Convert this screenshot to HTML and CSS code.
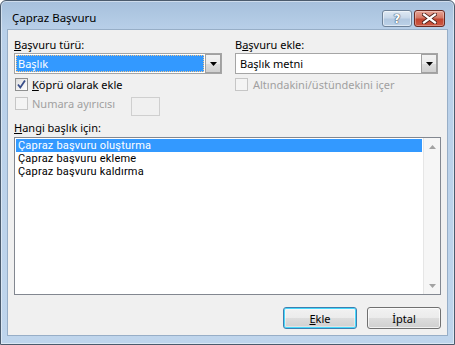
FILE: index.html
```html
<!DOCTYPE html>
<html lang="tr">
<head>
<meta charset="utf-8">
<title>Çapraz Başvuru</title>
<link rel="stylesheet" href="styles.css">
</head>
<body>
<div class="window">
  <div class="titlebar">
    <span class="title">Çapraz Başvuru</span>
    <div class="caption-btns">
      <div class="cbtn help">
        <span class="glyph">?</span>
      </div>
      <div class="cbtn close">
        <svg width="15" height="11" viewBox="0 0 15 11">
          <path d="M2 1.5 L13 9.5 M13 1.5 L2 9.5" stroke="#4a1c16" stroke-width="4" stroke-linecap="square"/>
          <path d="M2 1.5 L13 9.5 M13 1.5 L2 9.5" stroke="#ffffff" stroke-width="2.2" stroke-linecap="square"/>
        </svg>
      </div>
    </div>
  </div>
  <div class="client">
    <div class="top-grid">
      <div class="col">
        <div class="label"><u>B</u>aşvuru türü:</div>
        <div class="combo">
          <div class="combo-value selected"><span>Başlık</span></div>
          <div class="combo-btn">
            <svg width="7" height="4" viewBox="0 0 7 4"><path d="M0 0 H7 L3.5 4 Z" fill="#000"/></svg>
          </div>
        </div>
        <div class="check-row">
          <span class="checkbox checked">
            <svg width="11" height="11" viewBox="0 0 11 11"><path d="M2 5.5 L4.3 8.5 L9 1.5" fill="none" stroke="#3a4f8a" stroke-width="1.8"/></svg>
          </span>
          <span class="check-text"><u>K</u>öprü olarak ekle</span>
        </div>
        <div class="check-row numara">
          <span class="checkbox disabled"></span>
          <span class="check-text disabled-text">Numara ayırıcısı</span>
          <span class="textbox"></span>
        </div>
      </div>
      <div class="col">
        <div class="label">B<u>a</u>şvuru ekle:</div>
        <div class="combo">
          <div class="combo-value"><span>Başlık metni</span></div>
          <div class="combo-btn">
            <svg width="7" height="4" viewBox="0 0 7 4"><path d="M0 0 H7 L3.5 4 Z" fill="#000"/></svg>
          </div>
        </div>
        <div class="check-row right-check">
          <span class="checkbox disabled"></span>
          <span class="check-text disabled-text">Altındakini/üstündekini içer</span>
        </div>
      </div>
    </div>
    <div class="label list-label"><u>H</u>angi başlık için:</div>
    <div class="listbox">
      <ul class="items">
        <li class="item selected">Çapraz başvuru oluşturma</li>
        <li class="item">Çapraz başvuru ekleme</li>
        <li class="item">Çapraz başvuru kaldırma</li>
      </ul>
      <div class="scrollbar">
        <div class="sb-arrow">
          <svg width="7" height="4" viewBox="0 0 7 4"><path d="M0 4 H7 L3.5 0 Z" fill="#a3a3a3"/></svg>
        </div>
        <div class="sb-track"></div>
        <div class="sb-arrow">
          <svg width="7" height="4" viewBox="0 0 7 4"><path d="M0 0 H7 L3.5 4 Z" fill="#a3a3a3"/></svg>
        </div>
      </div>
    </div>
    <div class="buttons">
      <div class="btn default"><u>E</u>kle</div>
      <div class="btn">İptal</div>
    </div>
  </div>
</div>
</body>
</html>
```

FILE: styles.css
```css
* { box-sizing: border-box; }
html, body { margin: 0; padding: 0; }
body {
  width: 455px;
  height: 345px;
  overflow: hidden;
  background: #ffffff;
  font-family: "Noto Sans", "Open Sans", sans-serif;
  font-size: 11px;
  color: #000;
}
u { text-decoration: underline; text-underline-offset: 1px; }

.window {
  width: 455px;
  height: 345px;
  border: 1px solid #4b5b6d;
  border-radius: 6px 6px 0 0;
  background: linear-gradient(#a6c0dc 0px, #b9d0e9 30px, #bfd5ec 100%);
  padding: 0 6px 8px 6px;
  display: flex;
  flex-direction: column;
  box-shadow: inset 0 0 0 1px rgba(255,255,255,0.45);
}

.titlebar {
  height: 28px;
  display: flex;
  align-items: flex-start;
  justify-content: space-between;
  padding-left: 5px;
  padding-right: 3px;
}
.title {
  margin-top: 8px;
  line-height: 17px;
  font-size: 11.5px;
  color: #000;
}
.caption-btns {
  display: flex;
  gap: 2px;
  margin-top: 9px;
}
.cbtn {
  height: 17px;
  border-radius: 3px;
  display: flex;
  align-items: center;
  justify-content: center;
}
.cbtn.help {
  width: 30px;
  border: 1px solid #6e8299;
  background: linear-gradient(#dfe9f4 0%, #c8d8ea 45%, #b2c8e0 55%, #bcd1e8 100%);
  box-shadow: inset 0 0 0 1px rgba(255,255,255,0.5);
}
.cbtn.help .glyph {
  font-family: "DejaVu Sans", sans-serif;
  font-weight: bold;
  font-size: 12px;
  line-height: 14px;
  color: #ffffff;
  text-shadow: 0 0 1px #3d5068, 0 0 1px #3d5068, 0 0 1px #3d5068;
}
.cbtn.close {
  width: 31px;
  border: 1px solid #6b2a22;
  background: linear-gradient(#e8a597 0%, #d47866 45%, #c3442f 55%, #cc5a45 100%);
  box-shadow: inset 0 0 0 1px rgba(255,255,255,0.3);
}

.client {
  height: 307px;
  border: 1px solid #97aec7;
  background: #f0f0f0;
  padding: 7px 6px 6px 6px;
  display: flex;
  flex-direction: column;
}

.top-grid {
  display: grid;
  grid-template-columns: 208px 203px;
  column-gap: 13px;
}
.col { display: flex; flex-direction: column; }

.label {
  height: 15px;
  line-height: 15px;
  margin-bottom: 1px;
  white-space: nowrap;
}

.combo {
  height: 21px;
  border: 1px solid #a5a5a5;
  background: #fff;
  display: flex;
  padding: 1px;
}
.combo-value {
  flex: 1;
  display: flex;
  align-items: center;
  padding-left: 2px;
  border: 1px solid transparent;
  line-height: 15px;
}
.combo-value.selected {
  background: #3399ff;
  color: #fff;
  border: 1px dotted #f3c68a;
  padding-left: 1px;
}
.combo-btn {
  width: 16px;
  margin-left: 1px;
  border: 1px solid #a0a0a0;
  background: linear-gradient(#f2f2f2 0%, #ebebeb 50%, #dddddd 51%, #cfcfcf 100%);
  display: flex;
  align-items: center;
  justify-content: center;
  margin-top: -1px;
  margin-bottom: -1px;
  margin-right: -1px;
}

.check-row {
  display: flex;
  align-items: center;
  height: 15px;
  margin-top: 3px;
  padding-left: 1px;
}
.check-row.numara {
  margin-top: 5px;
  height: 19px;
  align-items: flex-start;
}
.check-row.numara .check-text { line-height: 13px; }
.right-check { padding-left: 0; }

.checkbox {
  width: 13px;
  height: 13px;
  flex: none;
  border: 1px solid #8e8f8f;
  background: linear-gradient(135deg, #dcdcdc 0%, #f4f4f4 60%, #ffffff 100%);
  display: flex;
  align-items: center;
  justify-content: center;
}
.checkbox.disabled {
  border-color: #c6c6c6;
  background: #f4f4f4;
}
.check-text {
  margin-left: 4px;
  white-space: nowrap;
  line-height: 15px;
}
.right-check .check-text { margin-left: 5px; }
.disabled-text { color: #a0a0a0; }

.textbox {
  width: 29px;
  height: 19px;
  margin-left: 16px;
  border: 1px solid #cfcfcf;
  background: #f0f0f0;
}

.list-label {
  margin-top: 4px;
  margin-bottom: 2px;
}

.listbox {
  width: 427px;
  height: 158px;
  border: 1px solid #828790;
  background: #fff;
  display: flex;
}
.items {
  flex: 1;
  list-style: none;
  margin: 0;
  padding: 1px;
  font-family: Roboto, "Noto Sans", sans-serif;
  font-size: 11px;
  letter-spacing: 0.2px;
}
.item {
  height: 13px;
  line-height: 13px;
  padding-left: 2px;
  white-space: nowrap;
}
.item.selected {
  background: #3399ff;
  color: #fff;
}
.scrollbar {
  width: 17px;
  display: flex;
  flex-direction: column;
  background: #f6f6f6;
  border-left: 1px solid #e6e6e6;
}
.sb-arrow {
  height: 17px;
  display: flex;
  align-items: center;
  justify-content: center;
}
.sb-track { flex: 1; }

.buttons {
  margin-top: 12px;
  display: flex;
  justify-content: flex-end;
  gap: 10px;
  width: 427px;
}
.btn {
  width: 74px;
  height: 22px;
  border: 1px solid #707070;
  border-radius: 3px;
  background: linear-gradient(#f2f2f2 0%, #ebebeb 50%, #dddddd 51%, #cfcfcf 100%);
  box-shadow: inset 0 0 0 1px rgba(255,255,255,0.7);
  display: flex;
  align-items: center;
  justify-content: center;
  line-height: 15px;
}
.btn.default {
  border-color: #3c7fb1;
  box-shadow: inset 0 0 0 1px #48d8fb, inset 0 0 0 2px rgba(255,255,255,0.4);
}
```
